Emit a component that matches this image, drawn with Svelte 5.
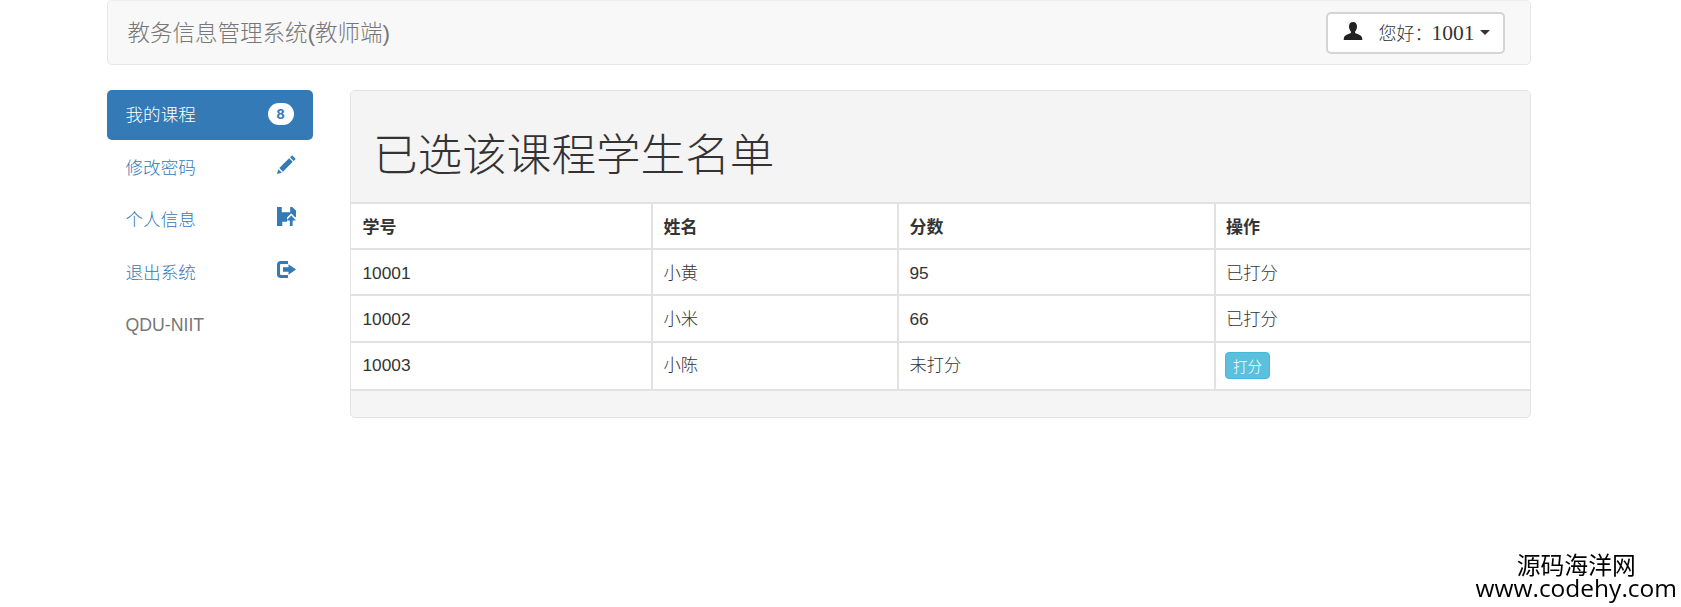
<script lang="ts">
  const nav = [
    { label: '修改密码', icon: 'pencil' },
    { label: '个人信息', icon: 'save' },
    { label: '退出系统', icon: 'logout' },
  ];

  const rows = [
    { id: '10001', name: '小黄', score: '95', done: true },
    { id: '10002', name: '小米', score: '66', done: true },
    { id: '10003', name: '小陈', score: '未打分', done: false },
  ];
</script>

<div class="page">
  <header class="navbar">
    <span class="brand">教务信息管理系统(教师端)</span>
    <button class="user-btn">
      <svg class="user-icon" viewBox="0 0 20 20" aria-hidden="true">
        <path d="M10 0.500c-2.600 0-4 2-4 4.600 0 2 .8 3.800 1.900 4.900v1.600c-2 1-5.600 2-6.600 3.600-.4.700-.6 1.800-.6 3.300h18.600c0-1.500-.2-2.600-.6-3.300-1-1.600-4.600-2.600-6.600-3.600V10c1.100-1.100 1.900-2.900 1.900-4.900 0-2.600-1.400-4.600-4-4.600z" />
      </svg>
      <span class="user-text">您好：<span class="user-id">1001</span></span>
      <span class="caret"></span>
    </button>
  </header>

  <div class="layout">
    <nav class="sidebar">
      <a class="item active" href="#courses">
        <span>我的课程</span>
        <span class="badge">8</span>
      </a>
      {#each nav as n}
        <a class="item" href="#{n.icon}">
          <span>{n.label}</span>
          {#if n.icon === 'pencil'}
            <svg class="icon" viewBox="0 0 18 18" aria-hidden="true">
              <path d="M14.300 0.300l3.400 3.400-1.900 1.900-3.400-3.400zM11.500 3.100l3.400 3.400-9.300 9.300-3.400-3.400zM1.200 13.400l3.400 3.400-4.600 1.200z" />
            </svg>
          {:else if n.icon === 'save'}
            <svg class="icon" viewBox="0 0 18 18" aria-hidden="true">
              <path d="M0 0H4.500V5H12.500V0H14.500L18 3.500V9.500H17L13.500 6L9.500 10V14H5V18H0z" />
              <path d="M13.500 8l4.500 4.800h-3.200V18h-2.600v-5.200H9z" />
            </svg>
          {:else}
            <svg class="icon" viewBox="0 0 19 18" aria-hidden="true">
              <path d="M3.500 0.500h7.500v3H4.200c-.7 0-1.200.5-1.200 1.200v8.600c0 .7.5 1.200 1.200 1.200H11v3H3.500C1.500 17.500 0 16 0 14v-10C0 2 1.500 0.500 3.500 0.500z" />
              <path d="M11.500 3.800l7.500 5.200-7.500 5.200v-3H6V6.800h5.500z" />
            </svg>
          {/if}
        </a>
      {/each}
      <div class="item plain">QDU-NIIT</div>
    </nav>

    <section class="panel">
      <div class="panel-head">
        <h1>已选该课程学生名单</h1>
      </div>
      <table>
        <thead>
          <tr>
            <th class="c1">学号</th>
            <th class="c2">姓名</th>
            <th class="c3">分数</th>
            <th>操作</th>
          </tr>
        </thead>
        <tbody>
          {#each rows as r}
            <tr>
              <td>{r.id}</td>
              <td>{r.name}</td>
              <td>{r.score}</td>
              <td>
                {#if r.done}
                  已打分
                {:else}
                  <button class="grade-btn">打分</button>
                {/if}
              </td>
            </tr>
          {/each}
        </tbody>
      </table>
      <div class="panel-foot"></div>
    </section>
  </div>
</div>

<div class="watermark">
  <div class="wm-cn">源码海洋网</div>
  <div>www.codehy.com</div>
</div>

<style>
  :global(body) {
    margin: 0;
    background: #fff;
    color: #333;
    font-family: "Liberation Sans", "Noto Sans CJK SC", sans-serif;
    font-size: 17px;
  }

  .page {
    width: 1424px;
    margin-left: 106.500px;
  }

  .navbar {
    display: flex;
    align-items: center;
    justify-content: space-between;
    box-sizing: border-box;
    height: 65px;
    padding: 0 25px 0 20px;
    margin-bottom: 25px;
    background: #f8f8f8;
    border: 1px solid #e7e7e7;
    border-top: 1px solid #eee;
    border-radius: 5px;
  }

  .brand {
    padding-bottom: 3px;
    color: #777;
    font-size: 22.500px;
    font-weight: 300;
  }

  .user-btn {
    display: flex;
    align-items: center;
    box-sizing: border-box;
    width: 179px;
    height: 42px;
    padding: 0 10px 0 15px;
    background: #fff;
    border: 2px solid #d4d4d4;
    border-radius: 5px;
    color: #333;
    font-family: "Liberation Serif", "Noto Sans CJK SC", serif;
    font-size: 18px;
    font-weight: 300;
  }

  .user-icon {
    flex-shrink: 0;
    width: 20px;
    height: 21px;
    margin-right: 16px;
    margin-top: -2px;
    fill: #222;
  }

  .user-text {
    flex-shrink: 0;
    margin-right: 5px;
    white-space: nowrap;
  }

  .user-id {
    margin-left: -1px;
    font-size: 21.500px;
  }

  .caret {
    flex-shrink: 0;
    width: 0;
    height: 0;
    border-top: 5px solid #333;
    border-left: 5px solid transparent;
    border-right: 5px solid transparent;
  }

  .layout {
    display: grid;
    grid-template-columns: 206px 1181px;
    column-gap: 37px;
  }

  .sidebar {
    display: flex;
    flex-direction: column;
    gap: 2.500px;
  }

  .item {
    display: flex;
    align-items: center;
    justify-content: space-between;
    box-sizing: border-box;
    height: 50px;
    padding: 0 17px 3px 19px;
    color: #337ab7;
    font-size: 17.600px;
    font-weight: 300;
    text-decoration: none;
    border-radius: 5px;
  }

  .item.active {
    background: #337ab7;
    color: #fff;
    padding-right: 19px;
  }

  .item.plain {
    padding-bottom: 0;
    color: #777;
    font-size: 17.700px;
    font-weight: 400;
  }

  .badge {
    display: flex;
    align-items: center;
    justify-content: center;
    width: 26px;
    height: 22px;
    background: #fff;
    border-radius: 11px;
    color: #337ab7;
    font-size: 14.500px;
    font-weight: 700;
  }

  .icon {
    width: 19px;
    height: 19px;
    margin-top: -4px;
    fill: #337ab7;
  }

  .panel {
    overflow: hidden;
    background: #f5f5f5;
    border: 1.500px solid #e3e3e3;
    border-radius: 5px;
  }

  .panel-head {
    display: flex;
    align-items: center;
    box-sizing: border-box;
    height: 111px;
    padding: 20px 23px 0 22.500px;
    background: #f4f4f4;
  }

  h1 {
    margin: 0;
    color: #333;
    font-size: 44.600px;
    font-weight: 300;
    line-height: 1;
  }

  table {
    width: 100%;
    table-layout: fixed;
    border-collapse: collapse;
    background: #fff;
  }

  th, td {
    height: 46px;
    box-sizing: border-box;
    padding: 2px 11px 0;
    border: 2px solid #e2e2e2;
    text-align: left;
    font-size: 17.300px;
    line-height: 1.2;
  }

  th:first-child, td:first-child {
    padding-left: 12px;
    border-left: 0;
  }

  th:last-child, td:last-child {
    padding-left: 10.500px;
    border-right: 0;
  }

  th {
    padding-top: 4px;
    font-size: 17px;
    font-weight: 700;
  }

  td {
    font-weight: 300;
  }

  tbody tr:last-child td {
    height: 48px;
    padding-top: 0;
    padding-bottom: 2px;
  }

  tbody tr:nth-child(2) td {
    height: 47px;
  }

  .c1 { width: 301px; }
  .c2 { width: 246px; }
  .c3 { width: 317px; }

  .grade-btn {
    display: block;
    width: 45px;
    height: 27px;
    padding: 0;
    margin: 1px 0 0 -1px;
    background: #5bc0de;
    border: 1px solid #46b8da;
    border-radius: 4px;
    color: #fff;
    font-family: inherit;
    font-size: 14.500px;
    font-weight: 300;
  }

  .panel-foot {
    height: 26px;
  }

  .watermark {
    position: fixed;
    right: 4px;
    bottom: 8px;
    color: #000;
    font-family: "Open Sans", "Noto Sans CJK SC", sans-serif;
    font-size: 24.500px;
    font-weight: 500;
    line-height: 22.500px;
    text-align: center;
  }

  .wm-cn {
    font-size: 23.800px;
    font-weight: 400;
  }
</style>
